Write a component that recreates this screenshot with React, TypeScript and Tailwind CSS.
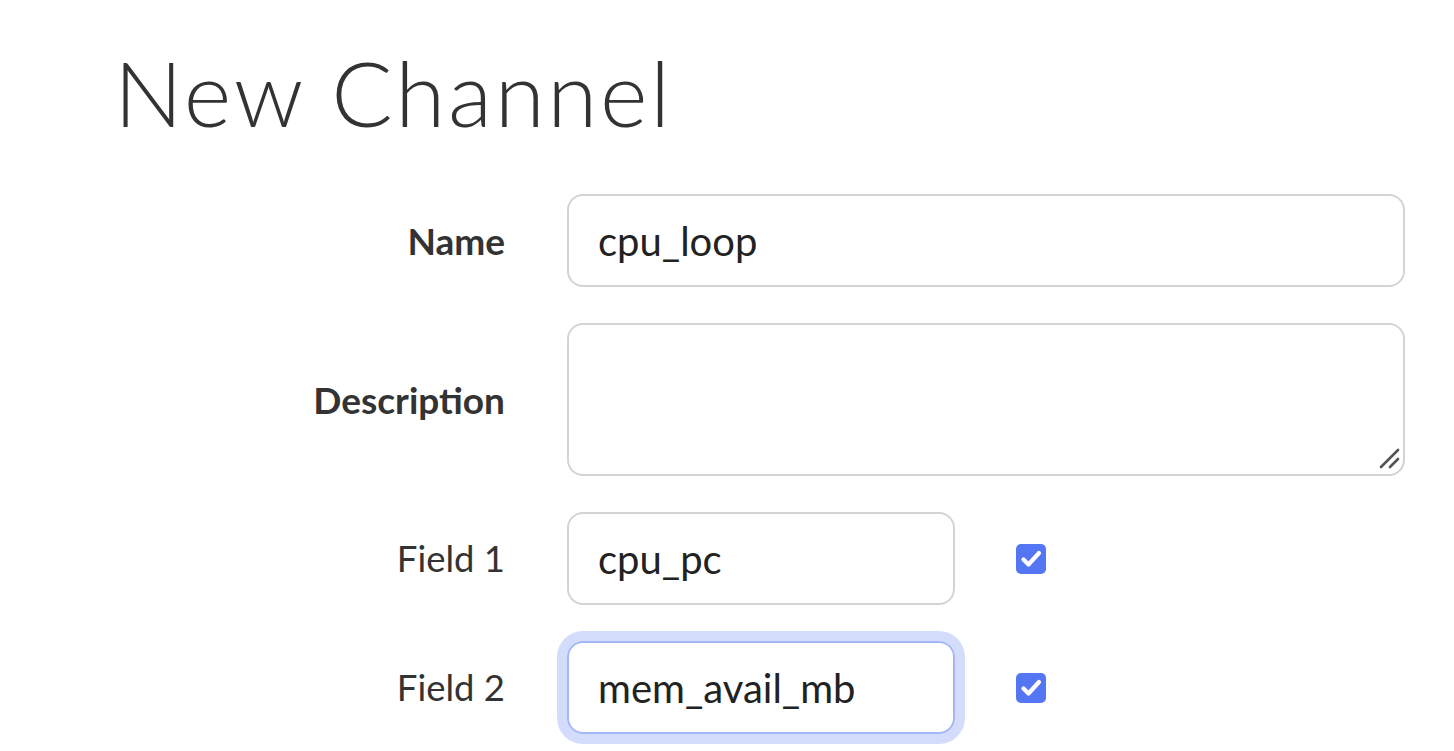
import React from "react";

const body = { fontFamily: "Lato, 'Source Sans Pro', sans-serif" } as React.CSSProperties;

function Check() {
  return (
    <span className="flex h-[30px] w-[30px] items-center justify-center rounded-[5px] bg-[#5576f2]">
      <svg width="30" height="30" viewBox="0 0 30 30" fill="none">
        <path d="M7.5 15.5l5 5L23 9" stroke="white" strokeWidth="4.2" strokeLinecap="round" strokeLinejoin="round" />
      </svg>
    </span>
  );
}

export default function App() {
  return (
    <div className="min-h-[751px] w-full bg-white text-[#333333]" style={body}>
      <h1 className="pl-[114px] pt-[40px] text-[91px] font-light leading-[104px] tracking-[2.6px] text-[#333333]" style={{ fontFamily: "Lato, sans-serif" }}>
        New Channel
      </h1>
      <div className="mt-[50px] grid grid-cols-[505px_1fr] items-center gap-x-[62px] gap-y-[36px] pr-[49px]">
        <label className="text-right text-[37px] font-bold">Name</label>
        <input
          defaultValue="cpu_loop"
          className="h-[93px] w-full rounded-[16px] border-2 border-[#d4d4d8] px-[29px] text-[40px] text-[#222] outline-none"
        />
        <label className="text-right text-[37px] font-bold">Description</label>
        <div className="relative h-[153px] w-full">
          <textarea className="h-full w-full resize-none rounded-[16px] border-2 border-[#d4d4d8] px-[29px] py-[20px] text-[40px] outline-none" />
          <svg className="absolute bottom-[6px] right-[4px]" width="22" height="22" viewBox="0 0 22 22" fill="none">
            <path d="M2 19L19 2" stroke="#555" strokeWidth="2.6" strokeLinecap="round" />
            <path d="M11 19L19 11" stroke="#555" strokeWidth="2.6" strokeLinecap="round" />
          </svg>
        </div>
        <label className="text-right text-[36.5px]">Field 1</label>
        <div className="flex items-center gap-[61px]">
          <input
            defaultValue="cpu_pc"
            className="h-[93px] w-[388px] rounded-[16px] border-2 border-[#d4d4d8] px-[29px] text-[40px] text-[#222] outline-none"
          />
          <Check />
        </div>
        <label className="text-right text-[36.5px]">Field 2</label>
        <div className="flex items-center gap-[61px]">
          <input
            defaultValue="mem_avail_mb"
            className="h-[93px] w-[388px] rounded-[16px] border-2 border-[#a3b6f7] px-[29px] text-[40px] text-[#222] shadow-[0_0_0_10px_#d3dcfb] outline-none"
          />
          <Check />
        </div>
      </div>
    </div>
  );
}
